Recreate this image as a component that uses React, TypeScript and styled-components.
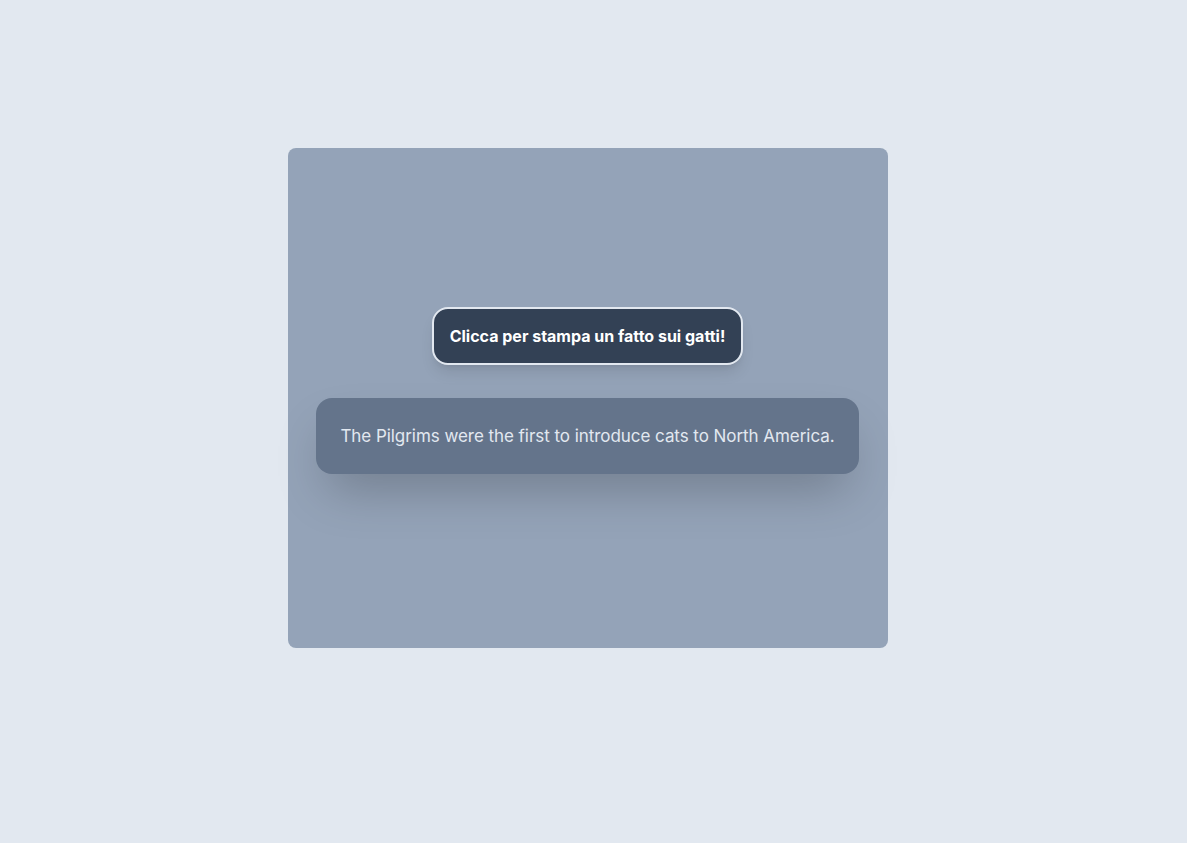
import React from "react";
import styled, { createGlobalStyle } from "styled-components";

const Global = createGlobalStyle`
  html, body { margin: 0; padding: 0; }
  body {
    background: #e2e8f0;
    font-family: Inter, "Noto Sans", sans-serif;
    -webkit-font-smoothing: antialiased;
  }
`;

const Page = styled.div`
  width: 1187px;
  height: 843px;
  display: flex;
  justify-content: center;
  padding: 148px 12px 0 0;
  box-sizing: border-box;
`;

const Card = styled.div`
  width: 600px;
  height: 500px;
  background: #94a3b8;
  border-radius: 8px;
  display: flex;
  flex-direction: column;
  align-items: center;
  justify-content: center;
`;

const Button = styled.button`
  font-family: Inter, "Noto Sans", sans-serif;
  font-weight: 700;
  font-size: 16px;
  line-height: 24px;
  color: #ffffff;
  background: #334155;
  border: 2px solid #e2e8f0;
  border-radius: 16px;
  padding: 15px 16px;
  margin-bottom: 33px;
  cursor: pointer;
  box-shadow: 0 10px 15px -3px rgba(0, 0, 0, 0.1), 0 4px 6px -4px rgba(0, 0, 0, 0.1);
`;

const Fact = styled.div`
  background: #64748b;
  color: #e2e8f0;
  font-size: 17px;
  letter-spacing: -0.05px;
  line-height: 28px;
  padding: 24px;
  border-radius: 16px;
  margin-bottom: 16px;
  box-shadow: 0 25px 50px -12px rgba(0, 0, 0, 0.25);
`;

export default function App() {
  return (
    <>
      <Global />
      <Page>
        <Card>
          <Button>Clicca per stampa un fatto sui gatti!</Button>
          <Fact>The Pilgrims were the first to introduce cats to North America.</Fact>
        </Card>
      </Page>
    </>
  );
}
